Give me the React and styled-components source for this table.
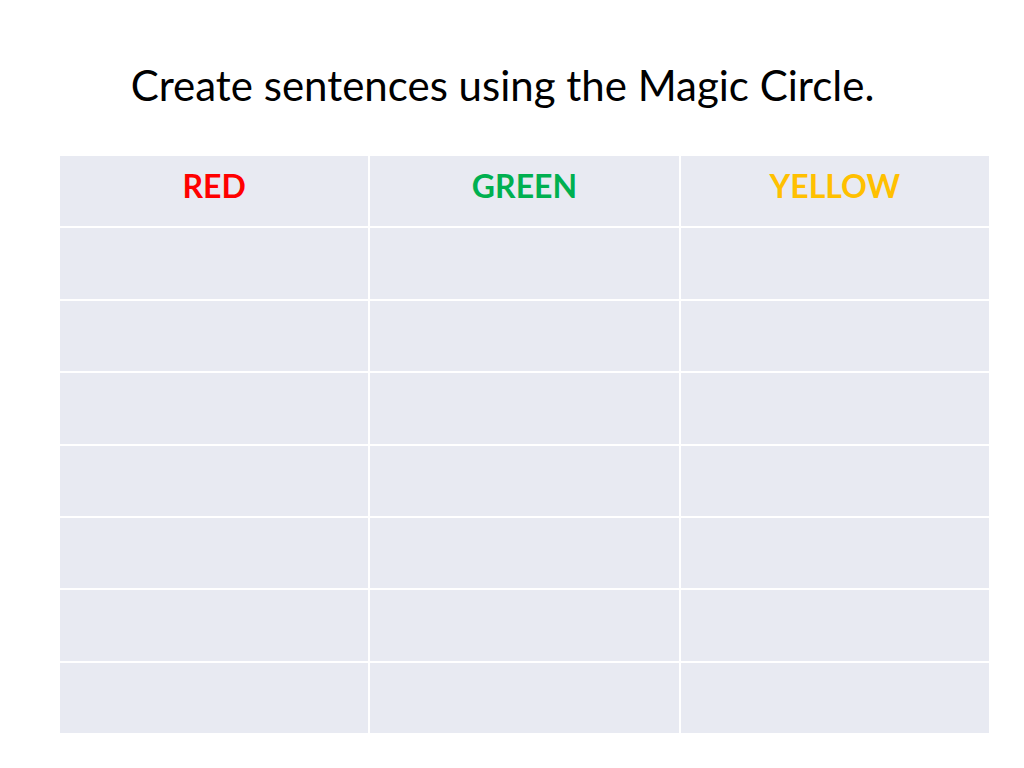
import styled, { createGlobalStyle } from "styled-components";

const GlobalStyle = createGlobalStyle`
  html, body {
    margin: 0;
    padding: 0;
    background: #ffffff;
  }
  body {
    font-family: Lato, "Liberation Sans", sans-serif;
  }
`;

const Slide = styled.div`
  width: 1024px;
  height: 768px;
  display: flex;
  flex-direction: column;
  background: #ffffff;
`;

const Title = styled.h1`
  margin: 58px 0 0;
  padding-right: 19px;
  height: 98px;
  font-family: Lato, "Liberation Sans", sans-serif;
  font-weight: 400;
  font-size: 42px;
  line-height: 54px;
  color: #000000;
  text-align: center;
`;

const Grid = styled.div`
  width: 929px;
  height: 577px;
  margin-left: 60px;
  display: grid;
  grid-template-columns: repeat(3, 1fr);
  grid-template-rows: repeat(8, 1fr);
  gap: 2px;
  background: #ffffff;
`;

const Cell = styled.div`
  background: #e8eaf2;
  display: flex;
  justify-content: center;
  align-items: flex-start;
  padding-top: 13px;
  font-family: Lato, "Liberation Sans", sans-serif;
  font-weight: 700;
  font-size: 32px;
  line-height: 34px;
  color: ${(props) => props.color || "#000"};
`;

const headers = [
  { label: "RED", color: "#ff0000" },
  { label: "GREEN", color: "#00b050" },
  { label: "YELLOW", color: "#ffc000" },
];

const App = () => {
  const emptyCells = Array.from({ length: 21 });

  return (
    <>
      <GlobalStyle />
      <Slide>
        <Title>Create sentences using the Magic Circle.</Title>
        <Grid>
          {headers.map((h) => (
            <Cell key={h.label} color={h.color}>
              {h.label}
            </Cell>
          ))}
          {emptyCells.map((_, i) => (
            <Cell key={i} />
          ))}
        </Grid>
      </Slide>
    </>
  );
};

export default App;
